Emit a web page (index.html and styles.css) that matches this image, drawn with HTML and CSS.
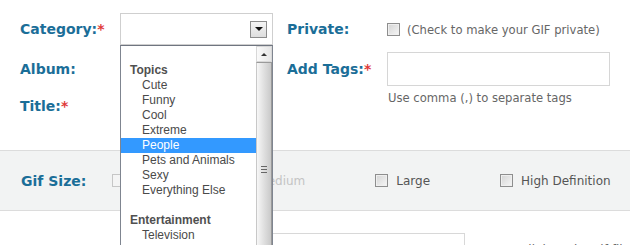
FILE: index.html
```html
<!DOCTYPE html>
<html>
<head>
<meta charset="utf-8">
<link rel="stylesheet" href="styles.css">
</head>
<body>
<div class="page">
  <div class="top">
    <div class="label r1">Category:<span class="req">*</span></div>
    <div class="selectwrap r1">
      <div class="select"><span class="dropbtn"><span class="tri"></span></span></div>
      <div class="listbox">
        <div class="opts">
          <div class="opt"></div>
          <div class="grp">Topics</div>
          <div class="opt">Cute</div>
          <div class="opt">Funny</div>
          <div class="opt">Cool</div>
          <div class="opt">Extreme</div>
          <div class="opt sel">People</div>
          <div class="opt">Pets and Animals</div>
          <div class="opt">Sexy</div>
          <div class="opt">Everything Else</div>
          <div class="opt"></div>
          <div class="grp">Entertainment</div>
          <div class="opt">Television</div>
        </div>
        <div class="scroll">
          <div class="sbtn"><span class="uptri"></span></div>
          <div class="thumb"><span class="grip"></span></div>
        </div>
      </div>
    </div>
    <div class="label r1 c4">Private:</div>
    <div class="privfield r1">
      <span class="cb"></span><span class="note">(Check to make your GIF private)</span>
    </div>

    <div class="label r2">Album:</div>
    <div class="label r2 c4">Add Tags:<span class="req">*</span></div>
    <div class="tags r2"></div>

    <div class="label r3 title">Title:<span class="req">*</span></div>
    <div class="hint r3">Use comma (,) to separate tags</div>
  </div>

  <div class="band">
    <div class="label gif">Gif Size:</div>
    <div class="sizes">
      <div class="size off"><span class="cb"></span><span>Small</span></div>
      <div class="size off"><span class="cb"></span><span>Medium</span></div>
      <div class="size"><span class="cb"></span><span>Large</span></div>
      <div class="size"><span class="cb"></span><span>High Definition</span></div>
    </div>
  </div>

  <div class="lower">
    <div class="bigbox"></div>
    <div class="lowtext">Insert a link to the gif file</div>
  </div>
</div>
</body>
</html>
```

FILE: styles.css
```css
html, body {
  margin: 0;
  padding: 0;
  height: 245px;
  overflow: hidden;
  background: #fff;
}
.page {
  font-family: "DejaVu Sans", Verdana, sans-serif;
  position: relative;
}
.top {
  display: grid;
  grid-template-columns: 100px 153px 14px 100px 223px;
  grid-template-rows: 32px 34px auto;
  row-gap: 7px;
  padding: 13px 0 0 20px;
}
.label {
  font-weight: bold;
  font-size: 14px;
  color: #1b6e98;
  line-height: 16px;
  align-self: center;
  white-space: nowrap;
}
.req { color: #e03a3a; }
.r1 { grid-row: 1; }
.r2 { grid-row: 2; }
.r3 { grid-row: 3; }
.label.r1, .label.r2 { grid-column: 1; }
.label.c4 { grid-column: 4; }
.label.title { align-self: start; padding-top: 5px; }

.selectwrap {
  grid-column: 2;
  position: relative;
  z-index: 5;
}
.select {
  box-sizing: border-box;
  height: 32px;
  border: 1px solid #cfcfcf;
  background: #fff;
  display: flex;
  align-items: center;
  justify-content: flex-end;
  padding-right: 5px;
}
.dropbtn {
  box-sizing: border-box;
  width: 17px;
  height: 17px;
  border: 1px solid #8c8c8c;
  background: linear-gradient(#f4f4f4, #dedede);
  display: flex;
  align-items: center;
  justify-content: center;
}
.tri {
  width: 0;
  height: 0;
  border-left: 4px solid transparent;
  border-right: 4px solid transparent;
  border-top: 4px solid #111;
}
.listbox {
  position: absolute;
  left: 0;
  top: 32px;
  box-sizing: border-box;
  width: 153px;
  height: 215px;
  border: 1px solid #7f8590;
  border-top-color: #6f7580;
  background: #fff;
  display: flex;
}
.opts {
  flex: 1;
  padding-top: 2px;
  font-family: "Liberation Sans", Arial, sans-serif;
  font-size: 12px;
  color: #4a4a4a;
}
.opt, .grp {
  height: 15px;
  line-height: 15px;
  white-space: nowrap;
}
.opt { padding-left: 21px; }
.grp { padding-left: 9px; font-weight: bold; color: #505050; }
.opt.sel { background: #3399ff; color: #fff; }
.scroll {
  width: 16px;
  display: flex;
  flex-direction: column;
  background: #f0f0f0;
}
.sbtn {
  box-sizing: border-box;
  height: 16px;
  border: 1px solid #d8d8d8;
  background: linear-gradient(90deg, #fafafa, #e6e6e6);
  display: flex;
  align-items: center;
  justify-content: center;
}
.uptri {
  width: 0;
  height: 0;
  border-left: 3px solid transparent;
  border-right: 3px solid transparent;
  border-bottom: 3px solid #333;
}
.thumb {
  flex: 1;
  box-sizing: border-box;
  border: 1px solid #9a9a9a;
  border-left-color: #c8c8c8;
  background: linear-gradient(90deg, #f7f7f7 0%, #e4e4e4 40%, #c9c9c9 100%);
  position: relative;
}
.grip {
  position: absolute;
  left: 4px;
  top: 103px;
  width: 6px;
  height: 7px;
  background: repeating-linear-gradient(#666 0 1px, transparent 1px 3px);
}

.privfield {
  grid-column: 5;
  display: flex;
  align-items: center;
  padding-top: 1px;
}
.cb {
  box-sizing: border-box;
  width: 13px;
  height: 13px;
  border: 1px solid #8e8e8e;
  background: linear-gradient(135deg, #d4d4d4, #f6f6f6);
  box-shadow: inset 0 0 0 1px #efefef;
  flex: none;
}
.note {
  margin-left: 7px;
  font-size: 11.6px;
  color: #666;
  white-space: nowrap;
}
.tags {
  grid-column: 5;
  box-sizing: border-box;
  width: 223px;
  border: 1px solid #d6d6d6;
  background: #fff;
}
.hint {
  grid-column: 5;
  padding-left: 1px;
  font-size: 11.6px;
  line-height: 11px;
  color: #666;
  white-space: nowrap;
}

.band {
  margin-top: 36px;
  height: 59px;
  border-top: 1px solid #dcdcdc;
  border-bottom: 1px solid #dcdcdc;
  background: #f2f3f3;
  display: flex;
  align-items: center;
  padding-left: 21px;
}
.label.gif { width: 91px; }
.sizes {
  display: flex;
  gap: 70px;
}
.size {
  display: flex;
  align-items: center;
  gap: 8px;
  font-size: 12px;
  color: #555;
  white-space: nowrap;
}
.size.off { color: #c4c4c4; }
.size.off .cb { border-color: #c6c6c6; background: #f4f4f4; box-shadow: none; }

.lower {
  display: flex;
  padding: 22px 0 0 120px;
}
.bigbox {
  box-sizing: border-box;
  width: 349px;
  height: 40px;
  border: 1px solid #d8d8d8;
  background: #fff;
}
.lowtext {
  margin: 10px 0 0 14px;
  font-size: 12px;
  line-height: 14px;
  color: #666;
  white-space: nowrap;
}
```
